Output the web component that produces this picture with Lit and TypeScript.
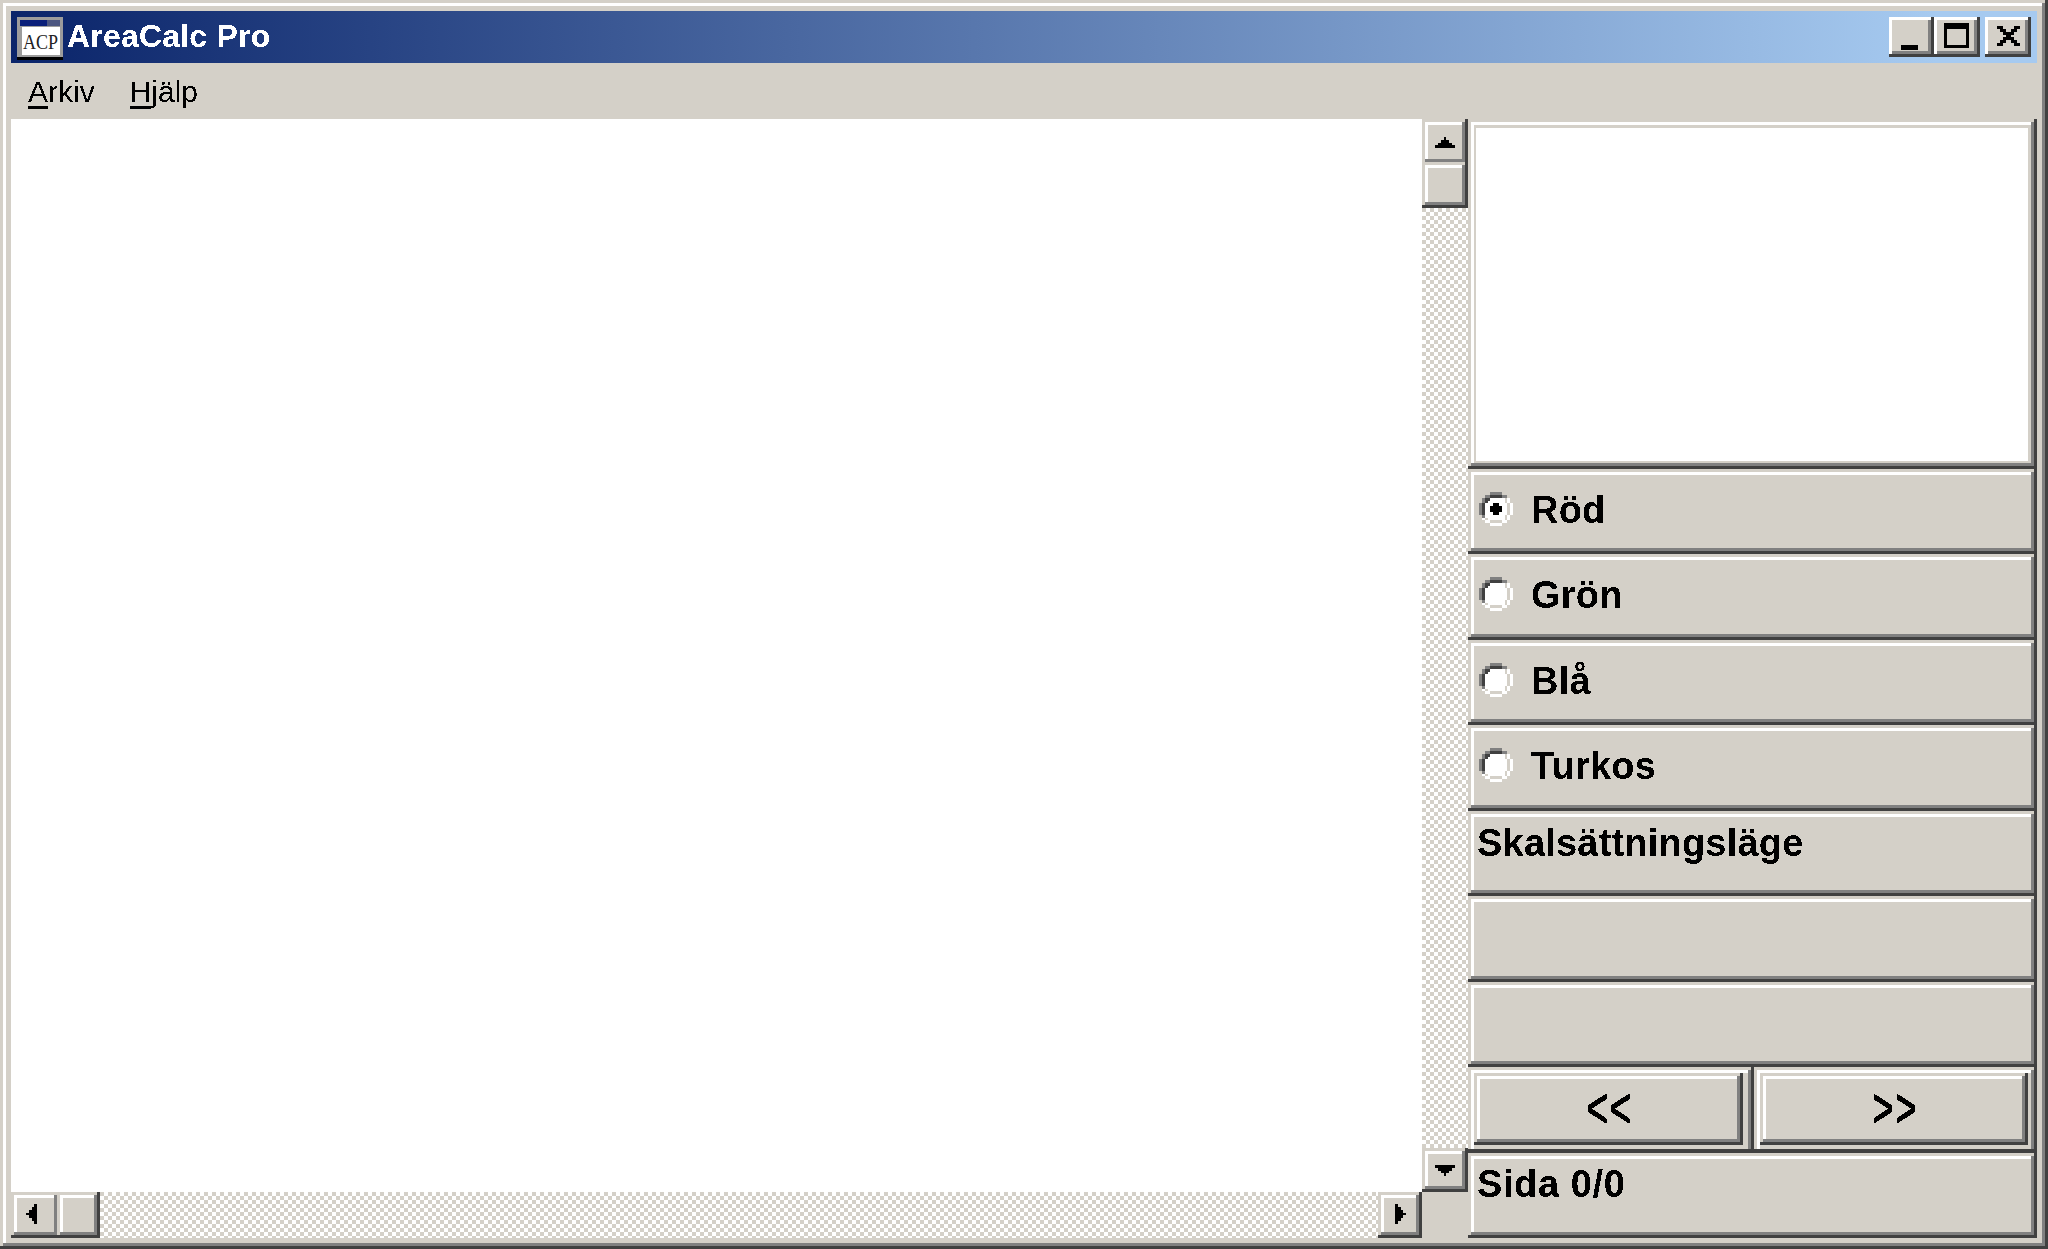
import { LitElement, html, css, svg } from "lit";
import { customElement } from "lit/decorators.js";

const RADIO = [
  "....gggg....",
  "..ggkkkkgg..",
  ".gkkWWWWWlw.",
  ".gkWWWWWWlw.",
  "gkWWWWWWWWlw",
  "gkWWWWWWWWlw",
  "gkWWWWWWWWlw",
  "gkWWWWWWWWlw",
  ".gWWWWWWWlw.",
  ".wlWWWWWWlw.",
  "..wwllllww..",
  "....wwww....",
];
const DOT = [".XX.", "XXXX", "XXXX", ".XX."];
const COLORS: Record<string, string> = { g: "#808080", k: "#404040", w: "#ffffff", W: "#ffffff", l: "#d4d0c8", X: "#000000" };

function cells(map: string[], ox = 0, oy = 0) {
  const out: unknown[] = [];
  map.forEach((row, y) => {
    [...row].forEach((c, x) => {
      if (c !== ".") out.push(svg`<rect x=${x + ox} y=${y + oy} width="1" height="1" fill=${COLORS[c]}></rect>`);
    });
  });
  return out;
}

const radio = (on: boolean) => html`<svg class="radio" viewBox="0 0 12 12" shape-rendering="crispEdges">
  ${cells(RADIO)}${on ? cells(DOT, 4, 4) : null}
</svg>`;

const arrow = (dir: "up" | "down" | "left" | "right") => {
  const maps = {
    up: ["...X...", "..XXX..", ".XXXXX.", "XXXXXXX"],
    down: ["XXXXXXX", ".XXXXX.", "..XXX..", "...X..."],
    left: ["...X", "..XX", ".XXX", "XXXX", ".XXX", "..XX", "...X"],
    right: ["X...", "XX..", "XXX.", "XXXX", "XXX.", "XX..", "X..."],
  };
  const m = maps[dir];
  const horiz = dir === "up" || dir === "down";
  return html`<svg class=${horiz ? "arr-h" : "arr-v"} viewBox="0 0 ${m[0].length} ${m.length}" shape-rendering="crispEdges">${cells(m)}</svg>`;
};

const closeGlyph = ["XX....XX", ".XX..XX.", "..XXXX..", "...XX...", "..XXXX..", ".XX..XX.", "XX....XX"];

@customElement("app-root")
export class AppRoot extends LitElement {
  static styles = css`
    :host {
      display: block;
      width: 2048px;
      height: 1249px;
      overflow: hidden;
      font-family: "Liberation Sans", Arial, sans-serif;
      color: #000;
    }
    .raised {
      background-color: #d4d0c8;
      box-shadow: inset -3px -3px 0 #404040, inset 3px 3px 0 #d4d0c8, inset -6px -6px 0 #808080, inset 6px 6px 0 #fff;
    }
    .px { filter: url(#px); }
    .defs { position: absolute; width: 0; height: 0; }
    .window {
      box-sizing: border-box;
      width: 2048px;
      height: 1249px;
      padding: 11px;
      display: flex;
      flex-direction: column;
    }
    .title {
      height: 52px;
      flex: none;
      box-sizing: border-box;
      display: flex;
      align-items: flex-start;
      padding: 6px 6px 0;
      background: linear-gradient(90deg, #0a246a, #a6caf0 95%);
    }
    .app-icon { width: 46px; height: 43px; flex: none; display: block; }
    .title-text {
      margin: 1px 0 0 4px;
      flex: 1;
      font-weight: 700;
      font-size: 32px;
      line-height: 37px;
      letter-spacing: 0.2px;
      color: #fff;
    }
    .wbtn {
      width: 45px;
      height: 40px;
      flex: none;
      box-sizing: border-box;
      display: flex;
      align-items: center;
      justify-content: center;
      background: #d4d0c8;
      box-shadow: inset -3px -3px 0 #404040, inset 3px 3px 0 #fff, inset -6px -6px 0 #808080;
    }
    .wbtn.close { width: 46px; margin-left: 5px; }
    .wbtn.max { width: 46px; }
    .min-g { width: 17px; height: 5px; background: #000; margin: 21px 5px 0 0; }
    .max-g {
      box-sizing: border-box;
      width: 25px;
      height: 25px;
      margin: 0 2px 3px 0;
      border: 3px solid #000;
      border-top-width: 6px;
    }
    .close-g { width: 23px; height: 20px; display: block; margin: 0 0 3px 1px; }
    .menu {
      height: 56px;
      flex: none;
      display: flex;
      align-items: flex-start;
      gap: 35px;
      padding: 12px 0 0 17px;
      box-sizing: border-box;
      font-size: 30px;
      line-height: 34px;
    }
    .menu u { text-decoration-thickness: 3px; text-underline-offset: 4px; }
    .main { flex: 1; display: flex; min-height: 0; }
    .left {
      width: 1457px;
      flex: none;
      display: grid;
      grid-template-columns: 1411px 46px;
      grid-template-rows: 1073px 46px;
    }
    .client { background: #fff; }
    .vbar, .hbar { display: flex; }
    .vbar { flex-direction: column; }
    .track { flex: 1; background: repeating-conic-gradient(#fff 0 25%, #d4d0c8 0 50%) 0 0 / 8px 8px; }
    .sb {
      flex: none;
      display: flex;
      align-items: center;
      justify-content: center;
      box-sizing: border-box;
    }
    .sb.up {
      height: 43px;
      padding-top: 4px;
      background-color: #d4d0c8;
      box-shadow: inset -3px 0 0 #404040, inset 3px 3px 0 #d4d0c8, inset -6px -3px 0 #808080, inset 6px 6px 0 #fff;
    }
    .sb.vthumb { height: 46px; }
    .sb.down { height: 44px; }
    .sb.lft {
      width: 46px;
      padding: 0 5px 3px 0;
      background-color: #d4d0c8;
      box-shadow: inset 0 -3px 0 #404040, inset 3px 3px 0 #d4d0c8, inset -3px -6px 0 #808080, inset 6px 6px 0 #fff;
    }
    .sb.hthumb { width: 43px; }
    .sb.rgt { width: 44px; padding-bottom: 3px; }
    .arr-h { width: 20px; height: 11px; display: block; }
    .arr-v { width: 11px; height: 20px; display: block; }
    .side {
      flex: 1;
      min-width: 0;
      display: grid;
      grid-template-rows: 350px repeat(9, minmax(0, 1fr));
    }
    .picture {
      box-sizing: border-box;
      padding: 9px 9px 8px 8px;
      display: flex;
    }
    .picture-inner { flex: 1; background: #fff; }
    .row {
      box-sizing: border-box;
      font-weight: 700;
      font-size: 38px;
      line-height: 44px;
      letter-spacing: 0.2px;
      padding: 10px 0 0 9px;
    }
    .row.sida { padding-top: 9px; letter-spacing: 0.6px; }
    .row.opt {
      display: flex;
      align-items: center;
      gap: 19px;
      padding: 0 0 4px 11px;
    }
    .row.opt span { margin-left: -1px; }
    .radio { width: 34px; height: 34px; flex: none; display: block; margin-bottom: 2px; }
    .btnrow { display: flex; min-height: 0; }
    .cell {
      flex: 1;
      min-width: 0;
      box-sizing: border-box;
      display: flex;
      background-color: #d4d0c8;
      box-shadow: inset -3px -4px 0 #404040, inset 3px 3px 0 #d4d0c8, inset -6px 0 0 #808080, inset 6px 6px 0 #fff;
    }
    .cell.a { padding: 6px 11px 8px 6px; }
    .cell.b { padding: 6px 9px 8px 6px; }
    .btn {
      flex: 1;
      min-width: 0;
      display: flex;
      align-items: center;
      justify-content: center;
      font-weight: 400;
      font-size: 36px;
      line-height: 44px;
      letter-spacing: 2px;
      -webkit-text-stroke: 1px #000;
      padding-bottom: 2px;
      box-sizing: border-box;
    }
    .btn span { display: inline-block; margin-left: 3px; transform: scaleY(1.55); }
  `;

  render() {
    return html`
      <svg class="defs" aria-hidden="true">
        <filter id="px" x="0" y="0" width="100%" height="100%" color-interpolation-filters="sRGB">
          <feComponentTransfer><feFuncA type="discrete" tableValues="0 0 1 1"></feFuncA></feComponentTransfer>
        </filter>
      </svg>
      <div class="window raised">
        <div class="title">
          <svg class="app-icon" viewBox="0 0 46 43" shape-rendering="crispEdges">
            <rect width="46" height="40" fill="#9c9c9c"></rect>
            <rect x="3" y="3" width="27" height="6" fill="#0a1f7a"></rect>
            <rect x="30" y="3" width="13" height="6" fill="#4c5680"></rect>
            <rect x="5" y="10" width="38" height="28" fill="#fff"></rect>
            <rect y="40" width="46" height="3" fill="#000"></rect>
            <text x="6" y="32" font-family="Liberation Serif" font-size="21" fill="#222" textLength="35" lengthAdjust="spacingAndGlyphs" shape-rendering="auto">ACP</text>
          </svg>
          <div class="title-text"><span class="px">AreaCalc Pro</span></div>
          <div class="wbtn min"><div class="min-g"></div></div>
          <div class="wbtn max"><div class="max-g"></div></div>
          <div class="wbtn close">
            <svg class="close-g" viewBox="0 0 8 7" shape-rendering="crispEdges">${cells(closeGlyph)}</svg>
          </div>
        </div>
        <div class="menu">
          <span class="px"><u>A</u>rkiv</span>
          <span class="px"><u>H</u>jälp</span>
        </div>
        <div class="main">
          <div class="left">
            <div class="client"></div>
            <div class="vbar">
              <div class="sb up">${arrow("up")}</div>
              <div class="sb vthumb raised"></div>
              <div class="track"></div>
              <div class="sb down raised">${arrow("down")}</div>
            </div>
            <div class="hbar">
              <div class="sb lft">${arrow("left")}</div>
              <div class="sb hthumb raised"></div>
              <div class="track"></div>
              <div class="sb rgt raised">${arrow("right")}</div>
            </div>
            <div class="corner"></div>
          </div>
          <div class="side">
            <div class="picture raised"><div class="picture-inner"></div></div>
            <div class="row opt raised">${radio(true)}<span class="px">Röd</span></div>
            <div class="row opt raised">${radio(false)}<span class="px">Grön</span></div>
            <div class="row opt raised">${radio(false)}<span class="px">Blå</span></div>
            <div class="row opt raised">${radio(false)}<span class="px">Turkos</span></div>
            <div class="row raised"><span class="px">Skalsättningsläge</span></div>
            <div class="row raised"></div>
            <div class="row raised"></div>
            <div class="btnrow">
              <div class="cell a"><div class="btn raised"><span class="px">&lt;&lt;</span></div></div>
              <div class="cell b"><div class="btn raised"><span class="px">&gt;&gt;</span></div></div>
            </div>
            <div class="row sida raised"><span class="px">Sida 0/0</span></div>
          </div>
        </div>
      </div>
    `;
  }
}
